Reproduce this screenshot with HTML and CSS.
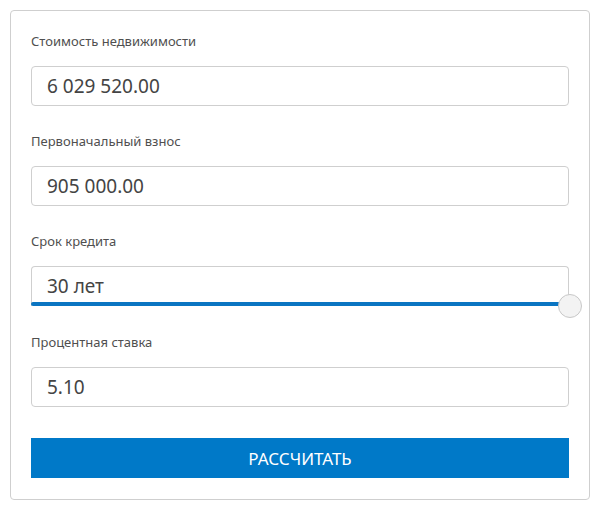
FILE: index.html
```html
<!DOCTYPE html>
<html lang="ru">
<head>
<meta charset="utf-8">
<link rel="stylesheet" href="styles.css">
</head>
<body>
<form class="card">
  <div class="field">
    <label class="label">Стоимость недвижимости</label>
    <div class="input">6 029 520.00</div>
  </div>
  <div class="field">
    <label class="label">Первоначальный взнос</label>
    <div class="input">905 000.00</div>
  </div>
  <div class="field">
    <label class="label">Срок кредита</label>
    <div class="input slider-input">30 лет
      <span class="track"></span>
      <span class="thumb"></span>
    </div>
  </div>
  <div class="field field-last">
    <label class="label">Процентная ставка</label>
    <div class="input">5.10</div>
  </div>
  <button type="button" class="btn">РАССЧИТАТЬ</button>
</form>
</body>
</html>
```
FILE: styles.css
```css
html, body {
  margin: 0;
  padding: 0;
  background: #fff;
}
body {
  font-family: "Noto Sans", "Open Sans", sans-serif;
}
.card {
  margin: 10px 0 0 10px;
  width: 538px;
  height: 448px;
  padding: 20px;
  box-sizing: content-box;
  border: 1px solid #cfcfcf;
  border-radius: 4px;
  display: flex;
  flex-direction: column;
}
.field {
  display: flex;
  flex-direction: column;
  margin-bottom: 25px;
}
.field-last {
  margin-top: 1px;
}
.label {
  font-size: 13px;
  line-height: 20px;
  color: #4f4f4f;
  margin-bottom: 15px;
}
.input {
  height: 40px;
  box-sizing: border-box;
  border: 1px solid #cfcfcf;
  border-radius: 4px;
  padding: 0 15px;
  font-size: 19px;
  line-height: 38px;
  color: #444;
}
.slider-input {
  position: relative;
  border-bottom: none;
  border-radius: 4px 4px 0 0;
}
.track {
  position: absolute;
  left: -1px;
  right: 8px;
  bottom: 0;
  height: 4px;
  background: #0a75c2;
  border-radius: 2px;
}
.thumb {
  position: absolute;
  right: -14px;
  bottom: -12px;
  width: 22px;
  height: 22px;
  border-radius: 50%;
  background: #f3f3f3;
  border: 1px solid #c8c8c8;
}
.btn {
  margin-top: 6px;
  height: 40px;
  border: none;
  border-radius: 0;
  background: #0079c8;
  color: #fff;
  font-family: "Noto Sans", "Open Sans", sans-serif;
  font-size: 17px;
  padding: 0;
  cursor: pointer;
}
```
